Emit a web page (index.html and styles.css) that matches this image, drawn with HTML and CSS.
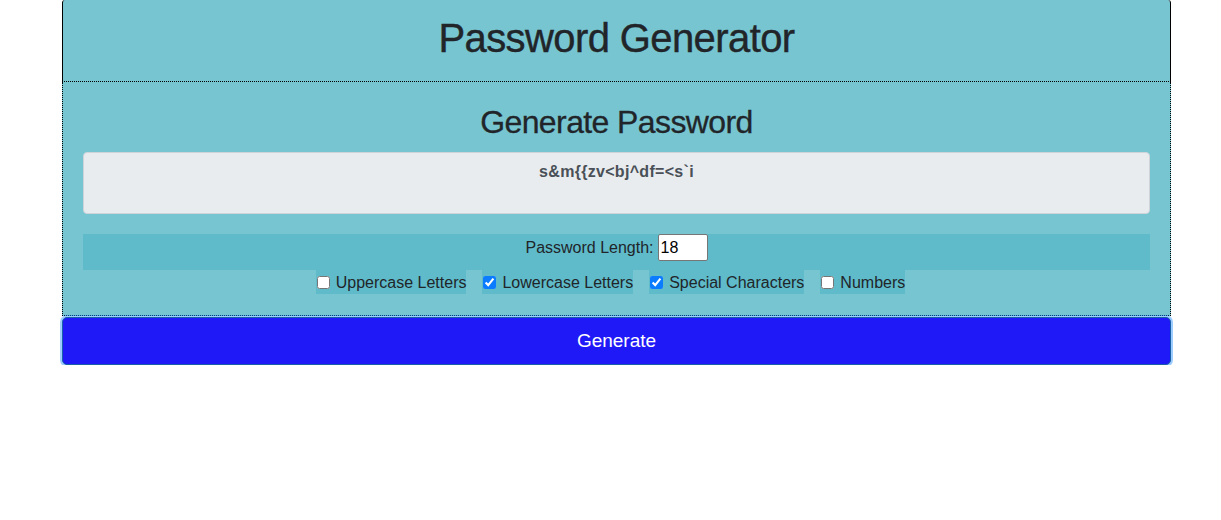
FILE: index.html
```html
<!DOCTYPE html>
<html lang="en">
<head>
<meta charset="utf-8">
<title>Password Generator</title>
<link rel="stylesheet" href="styles.css">
</head>
<body>
<div class="card">
  <div class="card-header">
    <h1 class="title">Password Generator</h1>
  </div>
  <div class="card-body">
    <h2 class="subtitle">Generate Password</h2>
    <textarea class="pw" readonly>s&amp;m{{zv&lt;bj^df=&lt;s`i</textarea>
    <div class="length-row">
      <label class="length-label" for="len">Password Length:</label>
      <input class="length-input" id="len" type="number" value="18">
    </div>
    <div class="options">
      <label class="opt"><input type="checkbox" class="chk">Uppercase Letters</label>
      <label class="opt"><input type="checkbox" class="chk" checked>Lowercase Letters</label>
      <label class="opt"><input type="checkbox" class="chk" checked>Special Characters</label>
      <label class="opt"><input type="checkbox" class="chk">Numbers</label>
    </div>
  </div>
  <button class="btn" type="button">Generate</button>
</div>
</body>
</html>
```

FILE: styles.css
```css
* { box-sizing: border-box; }

html, body {
  margin: 0;
  padding: 0;
  background: #ffffff;
  font-family: "Liberation Sans", Arial, sans-serif;
  color: #212529;
  font-size: 16px;
  line-height: 1.5;
}

.card {
  width: 1109px;
  margin-left: 62px;
  display: flex;
  flex-direction: column;
}

.card-header {
  background: #77c5d1;
  border-left: 1px solid #000;
  border-right: 1px solid #000;
  border-bottom: 1px dotted #000;
  border-radius: 3px 3px 0 0;
  padding: 14px 20px 11px;
  text-align: center;
}

.title {
  margin: 0 0 8px;
  font-size: 40px;
  font-weight: 400;
  line-height: 48px;
  letter-spacing: -0.6px;
  -webkit-text-stroke: 0.4px #212529;
}

.card-body {
  background: #77c5d1;
  border-left: 1px dotted #000;
  border-right: 1px dotted #000;
  border-bottom: 1px dotted #000;
  padding: 21px 20px 21px;
  display: flex;
  flex-direction: column;
}

.subtitle {
  margin: 0 0 11px;
  font-size: 32px;
  font-weight: 400;
  line-height: 38px;
  text-align: center;
  letter-spacing: -0.6px;
  -webkit-text-stroke: 0.3px #212529;
}

.pw {
  display: block;
  width: 100%;
  height: 62px;
  margin: 0 0 20px;
  padding: 7px 12px 5px;
  background: #e9ecef;
  border: 1px solid #ced4da;
  border-radius: 4px;
  color: #495057;
  font-family: inherit;
  font-size: 16px;
  font-weight: 700;
  line-height: 24px;
  letter-spacing: 0.3px;
  text-align: center;
  resize: none;
  outline: none;
}

.length-row {
  height: 36px;
  background: #5fbbc9;
  display: flex;
  justify-content: center;
  align-items: flex-start;
  gap: 4px;
}

.length-label {
  line-height: 27px;
}

.length-input {
  width: 50px;
  height: 27px;
  padding: 1px 2px;
  border: 1px solid #767676;
  border-radius: 2px;
  font-family: "Liberation Sans", Arial, sans-serif;
  font-size: 16px;
  color: #000;
  background: #fff;
}

.options {
  display: flex;
  justify-content: center;
  gap: 16px;
  padding-right: 12px;
}

.opt {
  display: flex;
  align-items: center;
  background: #5fbbc9;
  line-height: 24px;
  height: 24px;
  padding-top: 1px;
}

.chk {
  width: 13px;
  height: 13px;
  margin: 0 6px 0 1px;
  accent-color: #0b7cff;
}

.btn {
  display: block;
  width: 100%;
  height: 48px;
  margin-top: 1px;
  background: #1f19f7;
  color: #ffffff;
  border: 1px solid #1860a8;
  border-radius: 5px;
  box-shadow: 0 0 0 2px rgba(38, 143, 255, 0.45);
  font-family: inherit;
  font-size: 19px;
  font-weight: 400;
  line-height: 30px;
  padding: 8px 16px;
  cursor: pointer;
}
```
